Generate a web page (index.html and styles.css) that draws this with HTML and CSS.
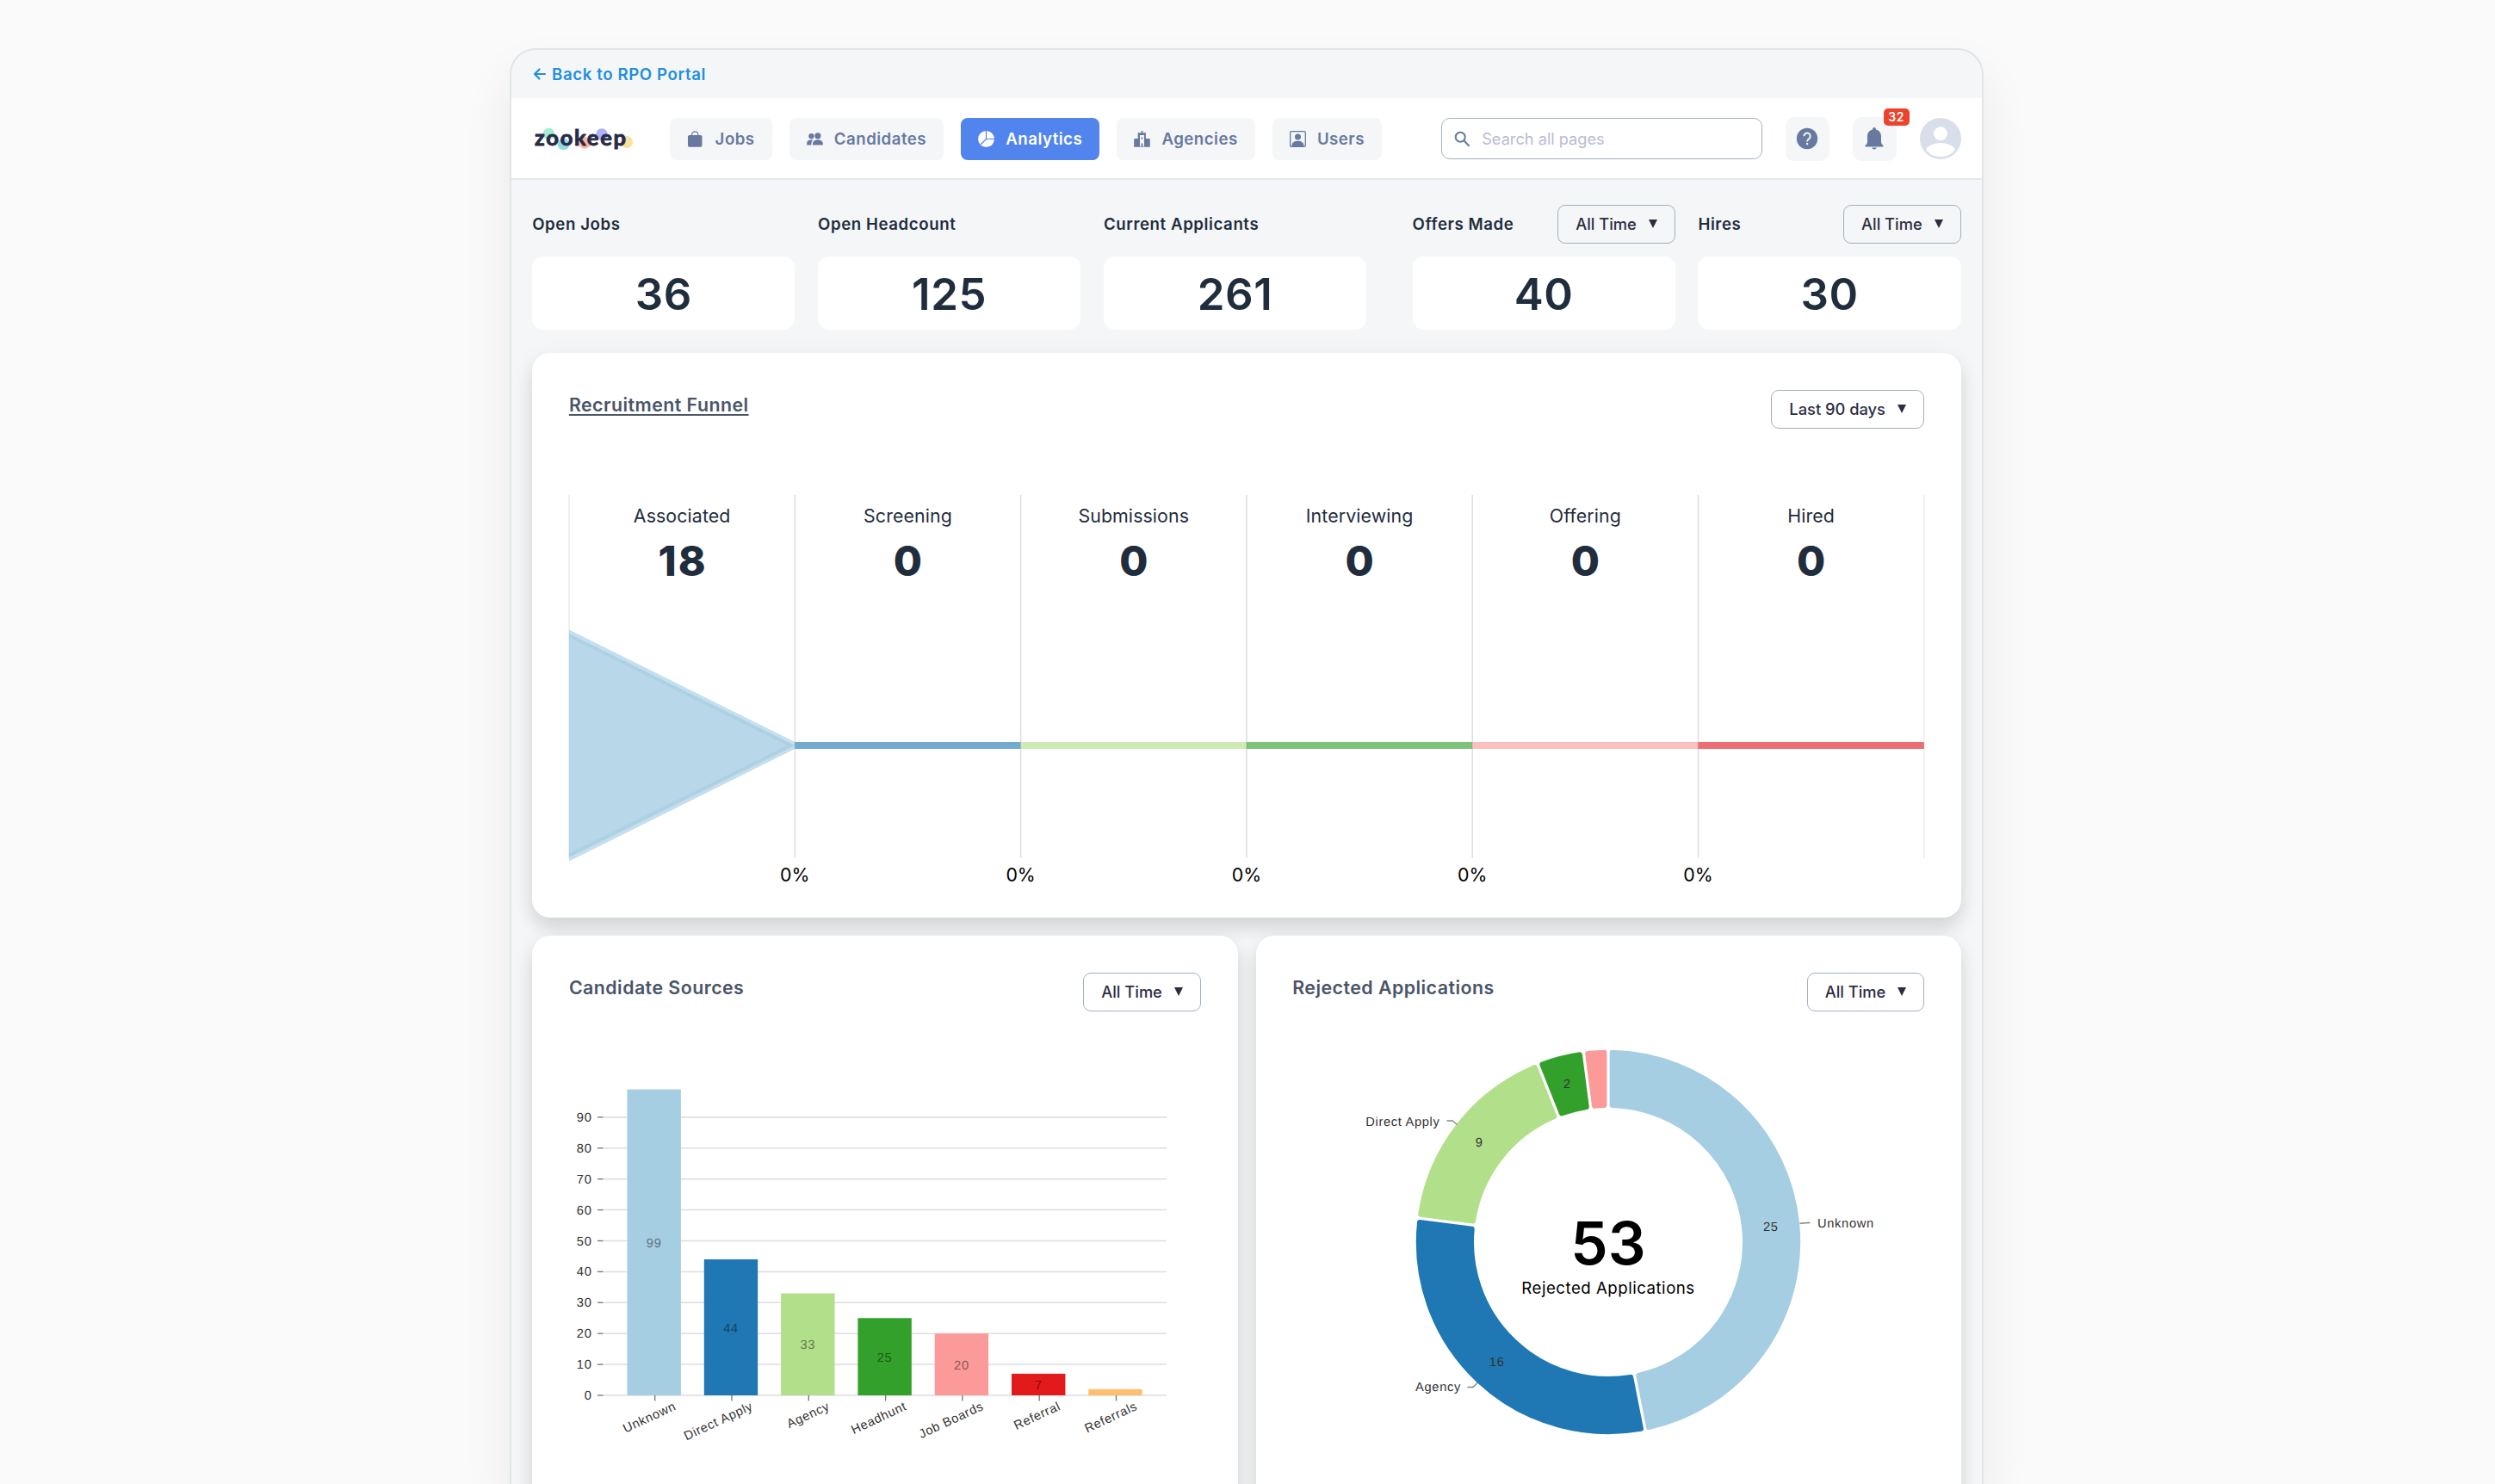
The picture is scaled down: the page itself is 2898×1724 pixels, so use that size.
FILE: index.html
```
<!DOCTYPE html>
<html lang="en">
  <head>
    <meta charset="UTF-8">
    <meta name="viewport" content="width=device-width, initial-scale=1.0">
    <title>Zookeep Analytics</title>
    <link rel="stylesheet" href="styles.css">
  </head>
  <body>
    <div class="app">
      <div class="top-bar">
        <a class="back-link" href="#">
          <svg width="16" height="16" viewBox="0 0 16 16" fill="none" stroke="currentColor" stroke-width="2.2" stroke-linecap="round" stroke-linejoin="round"><path d="M14 8H2M7.5 2.5L2 8l5.5 5.5"/></svg>
          Back to RPO Portal
        </a>
      </div>

      <header class="header">
        <svg class="logo" width="120" height="36" viewBox="0 0 120 36">
          <circle cx="19.5" cy="12.5" r="6.8" fill="#a5ecd0"/>
          <circle cx="36.5" cy="24.5" r="6.8" fill="#92dbe2"/>
          <circle cx="61" cy="23" r="6.8" fill="#ffb59d"/>
          <circle cx="81" cy="13" r="6.8" fill="#aeb2fb"/>
          <circle cx="110" cy="22" r="7" fill="#fde09b"/>
          <text class="logo-text" x="3" y="25.5" textLength="106">zookeep</text>
        </svg>
        <nav class="nav">
          <a class="nav-item" href="#">
            <svg width="19" height="19" viewBox="0 0 19 19"><rect x="1" y="5" width="16.5" height="13.8" rx="1.8" fill="currentColor"/><path d="M5.6 6V4.4a3.6 3.6 0 0 1 7.2 0V6" fill="none" stroke="currentColor" stroke-width="1.2"/></svg>
            Jobs
          </a>
          <a class="nav-item" href="#">
            <svg width="19" height="19" viewBox="0 0 19 19" fill="currentColor"><circle cx="5.4" cy="6.2" r="3.1"/><circle cx="12.9" cy="5.8" r="3.6"/><path d="M.2 16.4v-2c0-2.4 2-4 5-4 .8 0 1.5.1 2.1.4-1.3 1.1-1.9 2.5-1.9 4v1.6z"/><path d="M7 16.4v-1.6c0-2.5 2.4-4.3 5.9-4.3s5.9 1.8 5.9 4.3v1.6z"/></svg>
            Candidates
          </a>
          <a class="nav-item active" href="#">
            <svg width="19" height="19" viewBox="0 0 19 19"><circle cx="9.5" cy="9.5" r="9.4" fill="currentColor"/><path d="M9.5 0v9.500H19M9.500 9.500L3 16" fill="none" stroke="#5284ee" stroke-width="1.2"/></svg>
            Analytics
          </a>
          <a class="nav-item" href="#">
            <svg width="19" height="19" viewBox="0 0 19 19"><path fill="currentColor" fill-rule="evenodd" d="M8.7 0h1.6v2.2h3.6V9h3.6q1.3 0 1.3 1.3v8.5H.2v-8.5Q.2 9 1.5 9h3.2V2.2h4zM7 5v13h1.6v-3.6h1.8V18H12V5zM8.7 7.6h1.6v2.2H8.700z"/></svg>
            Agencies
          </a>
          <a class="nav-item" href="#">
            <svg width="19" height="19" viewBox="0 0 19 19"><rect x=".7" y=".7" width="17.6" height="17.6" rx="1.2" fill="none" stroke="currentColor" stroke-width="1.3"/><circle cx="9.5" cy="6.9" r="3.5" fill="currentColor"/><path d="M2.6 18v-1.2c0-3 2.8-5 6.9-5s6.9 2 6.9 5V18z" fill="currentColor"/></svg>
            Users
          </a>
        </nav>
        <div class="header-right">
          <div class="search">
            <svg width="19" height="19" viewBox="0 0 19 19" fill="none" stroke="#64779e" stroke-width="2"><circle cx="7.2" cy="7.2" r="5.5"/><path d="M11.3 11.3l6.2 6.4"/></svg>
            <span>Search all pages</span>
          </div>
          <button class="icon-button">
            <svg width="26" height="26" viewBox="0 0 26 26"><circle cx="13" cy="13" r="12.2" fill="currentColor"/><path d="M9.3 10.2a3.7 3.7 0 1 1 6 2.9c-1.5 1.1-2.3 1.7-2.3 3.3" fill="none" stroke="#f4f6f8" stroke-width="2"/><rect x="12" y="18" width="2.1" height="2.2" fill="#f4f6f8"/></svg>
          </button>
          <button class="icon-button">
            <svg width="22" height="27" viewBox="0 0 22 27" fill="currentColor"><path d="M11 0c1.1 0 1.9.8 1.9 1.9v.5C16.7 3.3 19 6.3 19 10.3v6.4c0 1.7.8 3 2.4 4.2v1.5H.6v-1.5C2.2 19.7 3 18.4 3 16.7v-6.4c0-4 2.3-7 6.1-7.9v-.5C9.1.8 9.9 0 11 0z"/><path d="M8.2 23.6h5.6a2.9 2.6 0 0 1-5.6 0z"/></svg>
            <span class="badge">32</span>
          </button>
          <svg class="avatar" width="48" height="48" viewBox="0 0 48 48"><circle cx="24" cy="24" r="24" fill="#d8deea"/><circle cx="24" cy="18.3" r="8" fill="#fff"/><path d="M6.8 36.5C10.5 31.8 16.5 29 24 29s13.5 2.8 17.2 7.5C37.5 42 31 45.2 24 45.2S10.5 42 6.8 36.5z" fill="#fff"/></svg>
        </div>
      </header>

      <main class="content">
        <section class="stats">
          <div class="stat">
            <div class="stat-head">Open Jobs</div>
            <div class="stat-value">36</div>
          </div>
          <div class="stat">
            <div class="stat-head">Open Headcount</div>
            <div class="stat-value">125</div>
          </div>
          <div class="stat">
            <div class="stat-head">Current Applicants</div>
            <div class="stat-value">261</div>
          </div>
          <div class="stat stat-gap">
            <div class="stat-head">Offers Made <button class="dropdown">All Time<i class="arrow"></i></button></div>
            <div class="stat-value">40</div>
          </div>
          <div class="stat">
            <div class="stat-head">Hires <button class="dropdown">All Time<i class="arrow"></i></button></div>
            <div class="stat-value">30</div>
          </div>
        </section>

        <section class="card funnel-card">
          <div class="card-head">
            <h2 class="underlined">Recruitment Funnel</h2>
            <button class="dropdown">Last 90 days<i class="arrow"></i></button>
          </div>
          <svg id="funnel" class="funnel" width="1574" height="455"></svg>
        </section>

        <section class="charts">
          <div class="card">
            <div class="card-head">
              <h2>Candidate Sources</h2>
              <button class="dropdown">All Time<i class="arrow"></i></button>
            </div>
            <svg id="sources" class="chart" width="734" height="560"></svg>
          </div>
          <div class="card">
            <div class="card-head">
              <h2>Rejected Applications</h2>
              <button class="dropdown">All Time<i class="arrow"></i></button>
            </div>
            <svg id="rejected" class="chart" width="734" height="560"></svg>
          </div>
        </section>
      </main>
    </div>

    <script>
      const colors = ['#a6cee3', '#1f78b4', '#b2df8a', '#33a02c', '#fb9a99', '#e31a1c', '#fdbf6f'];

      function darker(hex) {
        const k = 0.565;
        const rgb = [1, 3, 5].map(i => Math.round(parseInt(hex.slice(i, i + 2), 16) * k));
        return `rgb(${rgb.join(',')})`;
      }

      function drawFunnel() {
        const stages = [['Associated', 18], ['Screening', 0], ['Submissions', 0], ['Interviewing', 0], ['Offering', 0], ['Hired', 0]];
        const step = 262.3;
        const mid = 291;
        let html = '';
        for (let i = 0; i <= stages.length; i++) {
          const edge = i === 0 || i === stages.length;
          html += `<line class="${edge ? 'separator edge' : 'separator'}" x1="${i * step}" x2="${i * step}" y1="0" y2="421.5"/>`;
        }
        stages.forEach(([name, value], i) => {
          const x = i * step;
          if (value > 0) {
            html += `<path d="M${x} ${mid - 130}L${x + step} ${mid}L${x} ${mid + 130}z" fill="${colors[i]}" fill-opacity="0.8"/>`;
            html += `<path d="M${x} ${mid - 134.5}L${x + step} ${mid - 4}V${mid + 4}L${x} ${mid + 134.5}V${mid + 125.5}L${x + step - 9} ${mid}L${x} ${mid - 125.5}z" fill="${colors[i]}" fill-opacity="0.65"/>`;
          } else {
            html += `<rect x="${x}" y="${mid - 4}" width="${step}" height="8" fill="${colors[i]}" fill-opacity="0.63"/>`;
          }
          html += `<text class="stage-name" x="${x + step / 2}" y="32">${name}</text>`;
          html += `<text class="stage-value" x="${x + step / 2 + 1}" y="94">${value}</text>`;
          if (i > 0) html += `<text class="stage-rate" x="${x}" y="449">0%</text>`;
        });
        document.getElementById('funnel').innerHTML = html;
      }

      function drawSources() {
        const data = [['Unknown', 99], ['Direct Apply', 44], ['Agency', 33], ['Headhunt', 25], ['Job Boards', 20], ['Referral', 7], ['Referrals', 2]];
        const base = 431;
        const unit = 3.59;
        let html = '';
        for (let v = 0; v <= 90; v += 10) {
          const y = base - v * unit;
          html += `<line class="grid" x1="39.5" x2="694" y1="${y}" y2="${y}"/>`;
          html += `<line class="tick" x1="33" x2="39.5" y1="${y}" y2="${y}"/>`;
          html += `<text class="axis-label" x="26.5" y="${y + 5}">${v}</text>`;
        }
        data.forEach(([name, value], i) => {
          const x = 67.5 + i * 89.3;
          const h = value * unit;
          const cx = x + 31.2;
          html += `<rect x="${x}" y="${base - h}" width="62.4" height="${h}" fill="${colors[i]}"/>`;
          html += `<line class="tick" x1="${cx + 1}" x2="${cx + 1}" y1="${base}" y2="${base + 6.5}"/>`;
          html += `<text class="axis-label" transform="translate(${cx + 26.5} ${base + 16}) rotate(-25)">${name}</text>`;
          if (value > 5) html += `<text class="value-label" x="${cx}" y="${base - h / 2 + 5.5}" fill="${darker(colors[i])}">${value}</text>`;
        });
        document.getElementById('sources').innerHTML = html;
      }

      // ring slice with parallel padding; the stroke of 2 * r rounds its corners
      function slice(a0, a1, inner, outer, pad, r) {
        const off = pad / 2 + r;
        const ro = outer - r;
        const ri = inner + r;
        const point = (radius, a) => `${(radius * Math.sin(a)).toFixed(2)} ${(-radius * Math.cos(a)).toFixed(2)}`;
        const oo = Math.asin(off / ro);
        const oi = Math.asin(off / ri);
        const large = a1 - a0 > Math.PI ? 1 : 0;
        return `M${point(ro, a0 + oo)}A${ro} ${ro} 0 ${large} 1 ${point(ro, a1 - oo)}L${point(ri, a1 - oi)}A${ri} ${ri} 0 ${large} 0 ${point(ri, a0 + oi)}z`;
      }

      function drawRejected() {
        const data = [25, 16, 9, 2, 1];
        const total = data.reduce((a, b) => a + b, 0);
        const padAngle = 0.7 * Math.PI / 180;
        const perUnit = (Math.PI * 2 - data.length * padAngle) / total;
        let angle = 0;
        let html = '<g transform="translate(367 253)">';
        data.forEach((value, i) => {
          const next = angle + value * perUnit + padAngle;
          const mid = (angle + next) / 2;
          html += `<path d="${slice(angle, next, 156, 223.2, 3.3, 3)}" fill="${colors[i]}" stroke="${colors[i]}" stroke-width="6" stroke-linejoin="round"/>`;
          if (value > 1) html += `<text class="value-label dark" x="${189.6 * Math.sin(mid)}" y="${-189.6 * Math.cos(mid) + 5}">${value}</text>`;
          angle = next;
        });
        html += '<path class="link" d="M222.5 -21.5Q228 -22.5 234.5 -22.5"/><text class="link-label" x="243" y="-17">Unknown</text>';
        html += '<path class="link" d="M-152 163.5L-157 168.5H-163.5"/><text class="link-label end" x="-171" y="173">Agency</text>';
        html += '<path class="link" d="M-175.5 -136.5L-181 -141H-187.5"/><text class="link-label end" x="-195.5" y="-135.5">Direct Apply</text>';
        html += `<text class="total" x="0" y="26">${total}</text><text class="total-label" x="0" y="60">Rejected Applications</text></g>`;
        document.getElementById('rejected').innerHTML = html;
      }

      drawFunnel();
      drawSources();
      drawRejected();
    </script>
  </body>
</html>
```
FILE: styles.css
```
:root {
  --page: #fafafa;
  --panel: #f4f6f8;
  --text: #1f2d3d;
  --muted: #4a5568;
  --nav: #67799f;
  --primary: #5284ee;
  --border: #a3b1bf;
}

* {
  box-sizing: border-box;
}

body {
  margin: 0;
  padding-top: 56px;
  background-color: var(--page);
  color: var(--text);
  font-family: Inter, sans-serif;
  font-size: 18.67px;
}

.app {
  width: 1712px;
  height: 1668px;
  margin-left: 592px;
  background-color: var(--panel);
  border: 2px solid #e2e5e8;
  border-bottom: none;
  border-radius: 30px 30px 0 0;
  box-shadow: 0 30px 60px rgba(0, 0, 0, 0.07);
  overflow: hidden;
}

.top-bar {
  height: 56px;
  padding-left: 24.5px;
  display: flex;
  align-items: center;
}

.back-link {
  display: flex;
  align-items: center;
  gap: 6.5px;
  color: #1f8fdf;
  font-weight: 600;
  letter-spacing: 0.6px;
  text-decoration: none;
}

.header {
  height: 95px;
  padding: 1px 24.3px 0;
  display: flex;
  align-items: center;
  background-color: white;
  border-bottom: 2px solid #e1e8ef;
}

.logo {
  margin-right: 40px;
  overflow: visible;
}

.logo-text {
  font-family: Lato, sans-serif;
  font-size: 25.5px;
  font-weight: 700;
  fill: #272b47;
  stroke: #272b47;
  stroke-width: 0.9px;
  stroke-linejoin: round;
}

.nav {
  display: flex;
  gap: 20px;
}

.nav-item {
  height: 49px;
  padding: 0 20px;
  display: flex;
  align-items: center;
  gap: 13.3px;
  border-radius: 8px;
  background-color: var(--panel);
  color: var(--nav);
  font-weight: 600;
  letter-spacing: 0.47px;
  text-decoration: none;
}

.nav-item.active {
  background-color: var(--primary);
  color: white;
}

.header-right {
  margin-left: auto;
  display: flex;
  align-items: center;
  gap: 27px;
}

.search {
  width: 372.5px;
  height: 48.5px;
  padding-left: 14px;
  display: flex;
  align-items: center;
  gap: 13px;
  border: 1.5px solid var(--border);
  border-radius: 10px;
  color: #b9bbd3;
  font-size: 18.2px;
}

.icon-button {
  position: relative;
  width: 51px;
  height: 51px;
  padding: 0;
  display: flex;
  align-items: center;
  justify-content: center;
  border: none;
  border-radius: 11px;
  background-color: var(--panel);
  color: #67799f;
}

.badge {
  position: absolute;
  top: -10px;
  right: -15px;
  width: 30px;
  height: 20px;
  border-radius: 5px;
  background-color: #ed422c;
  color: white;
  font: 600 14px/20px Inter, sans-serif;
  letter-spacing: 0.7px;
  text-align: center;
}

.content {
  padding: 28.6px 24.4px 0 24.2px;
}

.stats {
  display: flex;
  gap: 26.7px;
  margin-bottom: 26.7px;
}

.stat {
  flex: 1;
}

.stat-gap {
  margin-left: 26.7px;
}

.stat-head {
  height: 45px;
  margin-bottom: 15.4px;
  display: flex;
  align-items: center;
  justify-content: space-between;
  font-weight: 600;
  letter-spacing: 0.57px;
}

.stat-value {
  height: 85.3px;
  border-radius: 13px;
  background-color: white;
  font-size: 51px;
  font-weight: 600;
  line-height: 87.5px;
  letter-spacing: 0.6px;
  text-align: center;
}

.dropdown {
  height: 45px;
  padding: 0 20px;
  display: flex;
  align-items: center;
  gap: 14px;
  border: 1.5px solid var(--border);
  border-radius: 9px;
  background-color: transparent;
  color: #2b2d42;
  font: 500 18.3px Inter, sans-serif;
}

.arrow {
  border: 5.5px solid transparent;
  border-top: 10px solid #2b2d42;
  border-bottom: none;
}

.card {
  padding: 42.7px 42.7px 36px;
  border-radius: 21px;
  background-color: white;
  box-shadow: 0 13px 20px rgba(0, 0, 0, 0.1), 0 5px 27px rgba(0, 0, 0, 0.06);
}

.card-head {
  display: flex;
  align-items: flex-start;
  justify-content: space-between;
}

.card-head h2 {
  margin: 0;
  color: var(--muted);
  font-size: 21.33px;
  font-weight: 600;
  line-height: 34px;
  letter-spacing: 0.47px;
}

.card-head .underlined {
  text-decoration: underline;
  text-underline-offset: 3px;
  text-decoration-thickness: 1.5px;
}

.funnel-card {
  height: 655.7px;
  margin-bottom: 21.3px;
}

.funnel {
  display: block;
  margin-top: 77px;
  overflow: visible;
}

.charts {
  display: grid;
  grid-template-columns: 1fr 1fr;
  gap: 21px;
}

.chart {
  display: block;
  margin-top: 15px;
  overflow: visible;
}

.separator {
  stroke: #dfdfdf;
  stroke-width: 1.6px;
}

.separator.edge {
  stroke: #ececec;
}

.stage-name,
.stage-value,
.stage-rate,
.total,
.total-label,
.value-label {
  text-anchor: middle;
}

.stage-name {
  fill: var(--text);
  font-size: 21.33px;
  letter-spacing: 0.1px;
}

.stage-value {
  fill: var(--text);
  font-size: 48px;
  font-weight: 800;
  letter-spacing: 2px;
}

.stage-rate {
  fill: black;
  font-size: 21.33px;
}

.grid {
  stroke: #dddddd;
  stroke-width: 1.5px;
}

.tick {
  stroke: #777777;
  stroke-width: 1.33px;
}

.axis-label,
.value-label,
.link-label {
  font-family: "Liberation Sans", sans-serif;
  font-size: 14.67px;
  letter-spacing: 0.67px;
  text-rendering: geometricPrecision;
}

.axis-label {
  fill: #333333;
  text-anchor: end;
}

.value-label.dark,
.link-label {
  fill: #333333;
}

.link-label.end {
  text-anchor: end;
}

.link {
  fill: none;
  stroke: #7c8a80;
  stroke-width: 1.33px;
}

.total {
  fill: black;
  font-size: 69px;
  font-weight: 600;
}

.total-label {
  fill: black;
  font-size: 18.67px;
  letter-spacing: 0.5px;
}
```
